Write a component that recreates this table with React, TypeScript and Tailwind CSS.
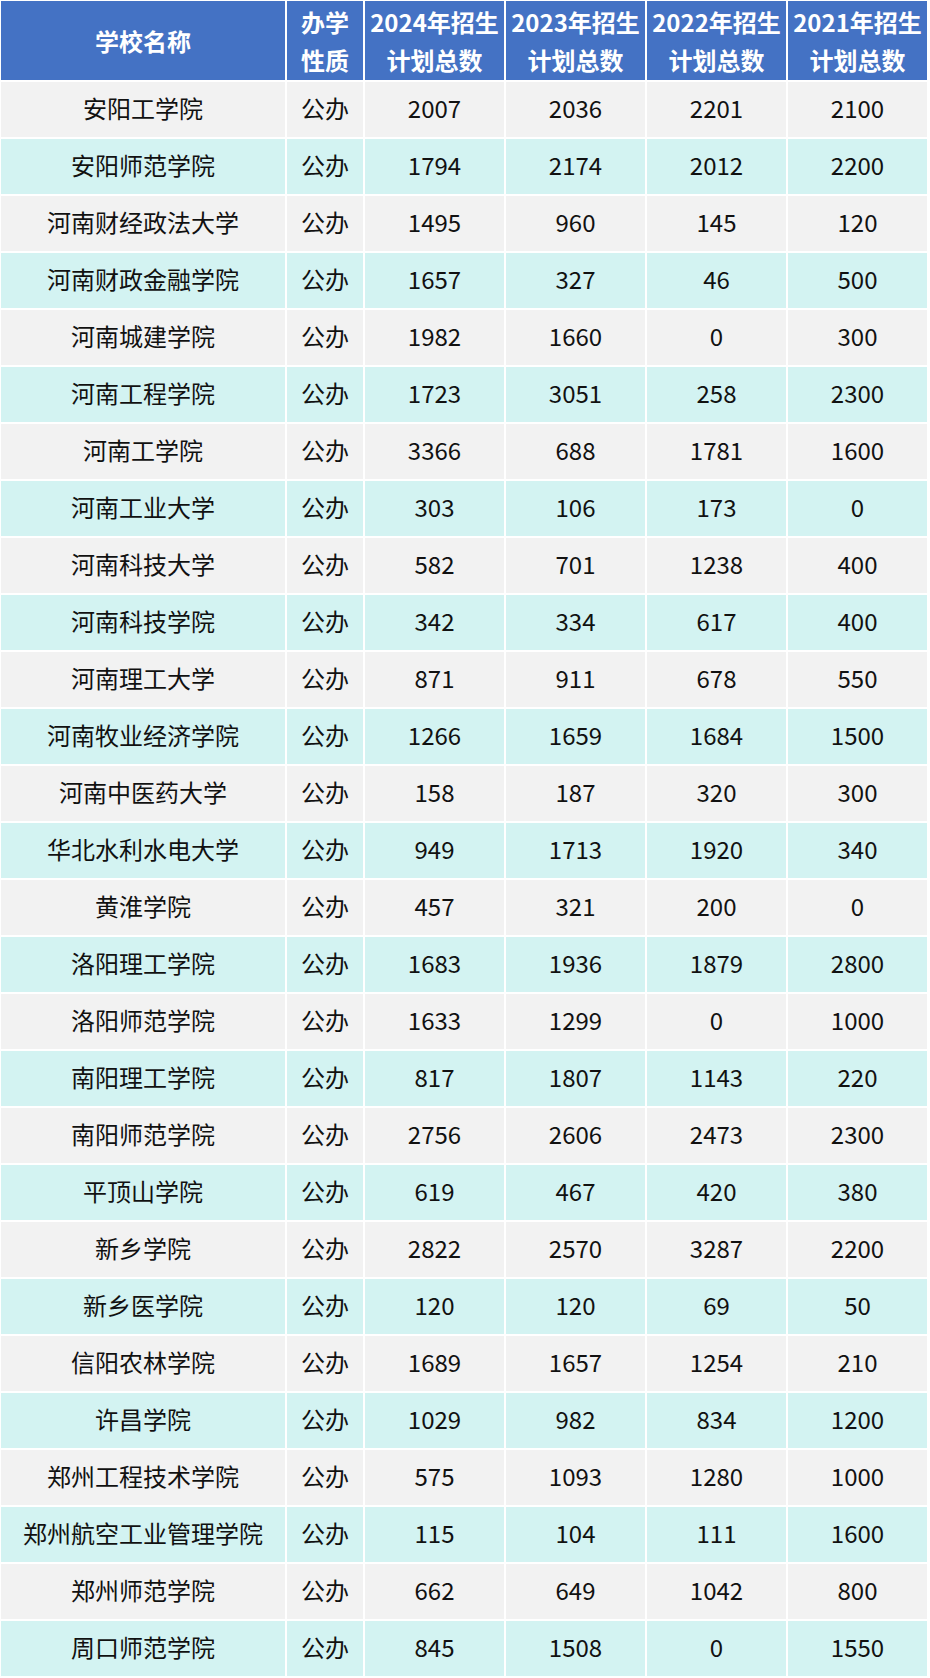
const rows: [string, string, string, string, string][] = [
  ["安阳工学院", "2007", "2036", "2201", "2100"],
  ["安阳师范学院", "1794", "2174", "2012", "2200"],
  ["河南财经政法大学", "1495", "960", "145", "120"],
  ["河南财政金融学院", "1657", "327", "46", "500"],
  ["河南城建学院", "1982", "1660", "0", "300"],
  ["河南工程学院", "1723", "3051", "258", "2300"],
  ["河南工学院", "3366", "688", "1781", "1600"],
  ["河南工业大学", "303", "106", "173", "0"],
  ["河南科技大学", "582", "701", "1238", "400"],
  ["河南科技学院", "342", "334", "617", "400"],
  ["河南理工大学", "871", "911", "678", "550"],
  ["河南牧业经济学院", "1266", "1659", "1684", "1500"],
  ["河南中医药大学", "158", "187", "320", "300"],
  ["华北水利水电大学", "949", "1713", "1920", "340"],
  ["黄淮学院", "457", "321", "200", "0"],
  ["洛阳理工学院", "1683", "1936", "1879", "2800"],
  ["洛阳师范学院", "1633", "1299", "0", "1000"],
  ["南阳理工学院", "817", "1807", "1143", "220"],
  ["南阳师范学院", "2756", "2606", "2473", "2300"],
  ["平顶山学院", "619", "467", "420", "380"],
  ["新乡学院", "2822", "2570", "3287", "2200"],
  ["新乡医学院", "120", "120", "69", "50"],
  ["信阳农林学院", "1689", "1657", "1254", "210"],
  ["许昌学院", "1029", "982", "834", "1200"],
  ["郑州工程技术学院", "575", "1093", "1280", "1000"],
  ["郑州航空工业管理学院", "115", "104", "111", "1600"],
  ["郑州师范学院", "662", "649", "1042", "800"],
  ["周口师范学院", "845", "1508", "0", "1550"],
];

const years = ["2024", "2023", "2022", "2021"];

const cols = "grid grid-cols-[284px_76px_139px_139px_139px_139px] gap-x-[2px]";

export default function App() {
  return (
    <div
      className="w-[930px] bg-white pl-[1px] pr-[2px] pt-[1px] pb-[2px] flex flex-col gap-y-[2px] text-[24px]"
      style={{ fontFamily: '"Noto Sans CJK SC", "Noto Sans", sans-serif' }}
    >
      {/* Header */}
      <div className={`${cols} h-[79px] text-white font-bold`}>
        <div className="bg-[#4472C4] flex items-center justify-center">学校名称</div>
        <div className="bg-[#4472C4] flex flex-col items-center justify-center leading-[38px]">
          <span>办学</span>
          <span>性质</span>
        </div>
        {years.map((y) => (
          <div key={y} className="bg-[#4472C4] flex flex-col items-center justify-center leading-[38px]">
            <span>{y}年招生</span>
            <span>计划总数</span>
          </div>
        ))}
      </div>

      {/* Body */}
      {rows.map((r, i) => {
        const bg = i % 2 === 0 ? "bg-[#F2F2F2]" : "bg-[#D3F3F2]";
        return (
          <div key={r[0]} className={`${cols} h-[55px] text-[#111]`}>
            <div className={`${bg} flex items-center justify-center pb-[3px]`}>{r[0]}</div>
            <div className={`${bg} flex items-center justify-center pb-[3px]`}>公办</div>
            {r.slice(1).map((v, j) => (
              <div key={j} className={`${bg} flex items-center justify-center pb-[3px]`}>
                {v}
              </div>
            ))}
          </div>
        );
      })}
    </div>
  );
}
